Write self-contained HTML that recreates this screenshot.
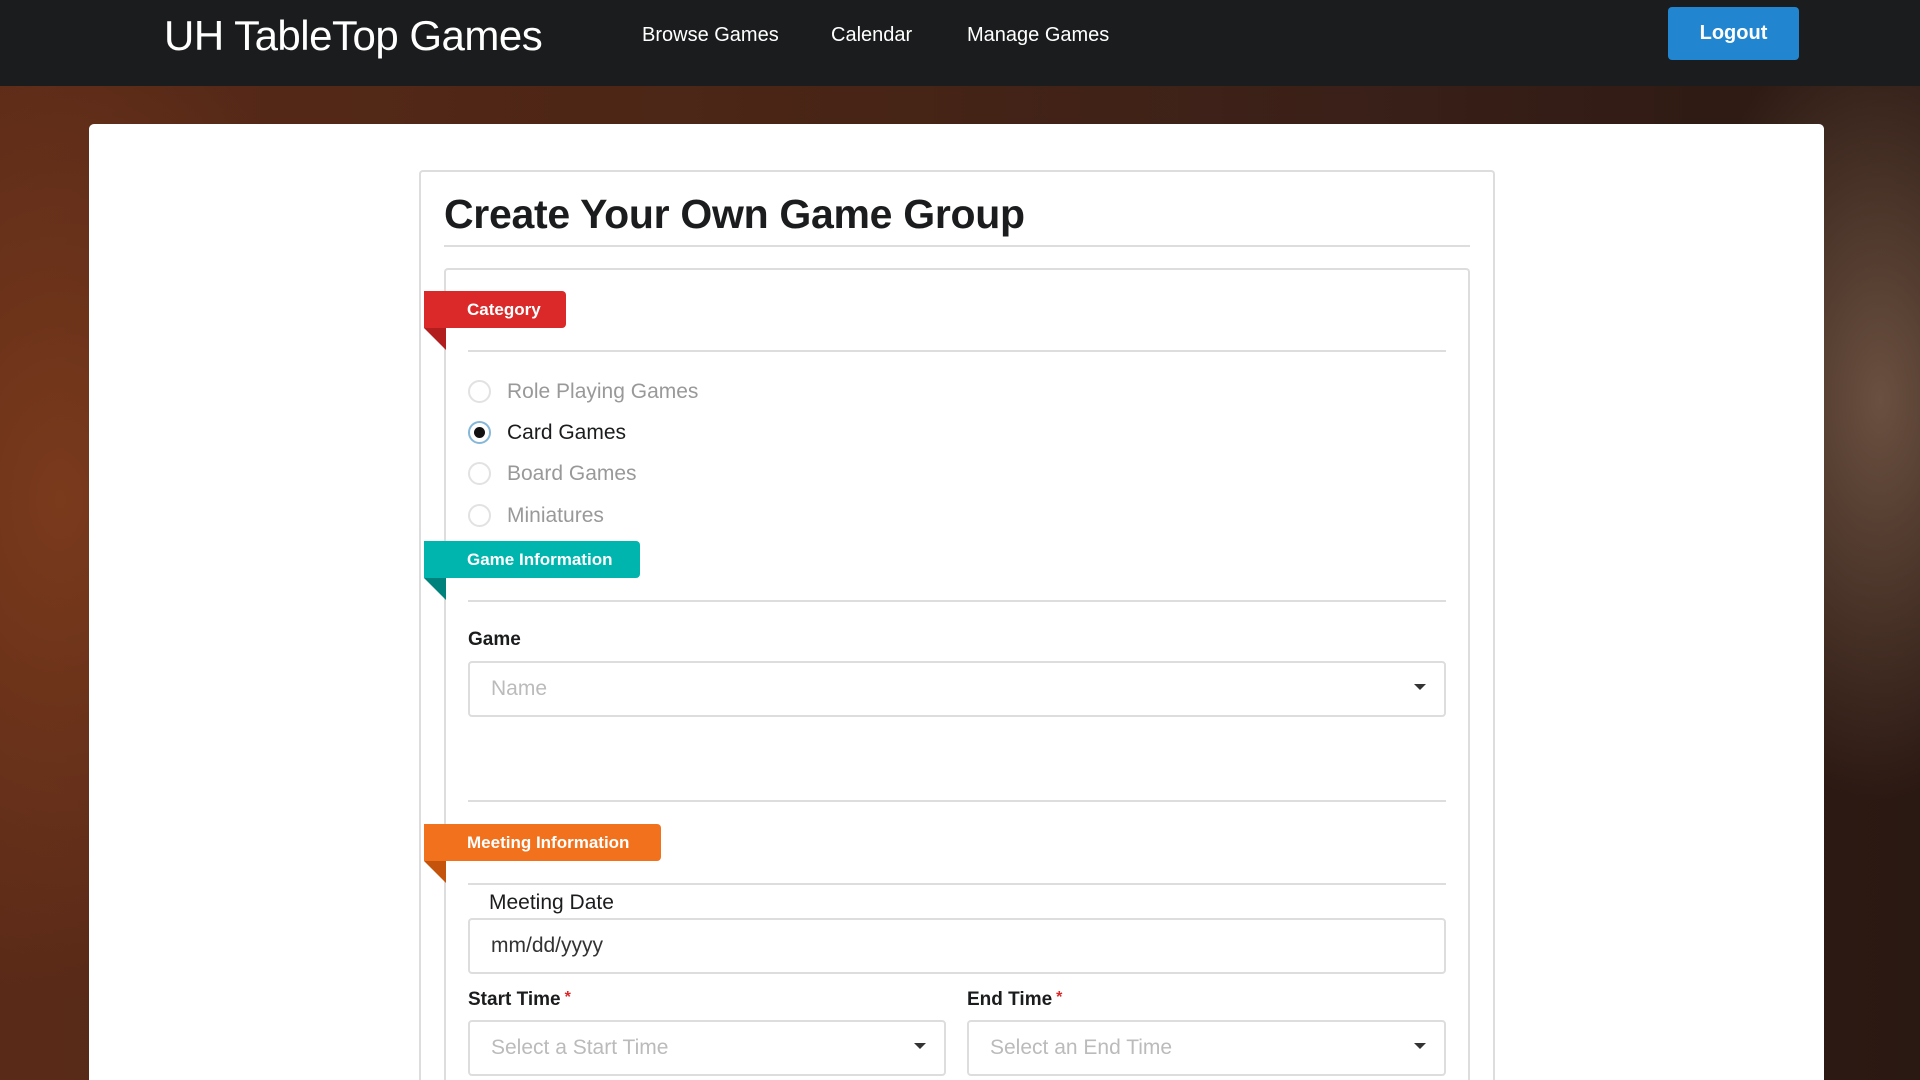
<!DOCTYPE html>
<html style="overflow:hidden;height:1080px"><head><meta charset="utf-8">
<style>
*{box-sizing:border-box;margin:0;padding:0}
body{width:1920px;height:1080px;overflow:hidden;font-family:"Liberation Sans",sans-serif;position:relative;
background:
radial-gradient(ellipse 300px 500px at 60px 500px,#7a3a1c 0%,rgba(0,0,0,0) 100%),
radial-gradient(ellipse 200px 400px at 1880px 400px,#6a5040 0%,rgba(0,0,0,0) 100%),
linear-gradient(90deg,#5a2a18 0%,#4a2516 40%,#3a2018 70%,#2a1812 100%);}
.a{position:absolute}
nav{position:absolute;left:0;top:0;width:1920px;height:86px;background:#1b1c1d}
.brand{left:164px;top:12px;font-size:42px;color:#fff;letter-spacing:-0.5px}
.nl{top:24px;font-size:20px;color:#fff}
.logout{left:1668px;top:7px;width:131px;height:53px;background:#2185d0;border-radius:4px;color:#fff;font-weight:bold;font-size:20px;text-align:center;line-height:53px}
.panel{left:89px;top:124px;width:1735px;height:956px;background:#fff;border-radius:5px 5px 0 0}
.card{left:419px;top:170px;width:1076px;height:910px;border:2px solid #ddd;border-bottom:none;border-radius:4px 4px 0 0;background:#fff}
h1{position:absolute;left:444px;top:191px;font-size:41px;color:#1b1c1d;font-weight:bold;letter-spacing:-0.3px}
.hr{position:absolute;height:2px;background:#ddd}
.seg{left:444px;top:268px;width:1026px;height:812px;border:2px solid #ddd;border-bottom:none;border-radius:4px 4px 0 0}
.rib{position:absolute;left:424px;height:37px;color:#fff;font-weight:bold;font-size:17px;line-height:37px;padding-left:43px;border-radius:0 4px 4px 0}
.fold{position:absolute;left:424px;width:0;height:0;border-left:22px solid transparent;border-top:22px solid}
.rd{position:absolute;left:468px;width:23px;height:23px;border:2px solid #e2e2e2;border-radius:50%}
.rl{position:absolute;left:507px;font-size:21px;color:#999}
.lbl{position:absolute;font-size:19px;font-weight:bold;color:#1b1c1d}
.inp{position:absolute;height:56px;border:2px solid #ddd;border-radius:4px;font-size:21px;color:#bbb;line-height:52px;padding-left:21px}
.car{position:absolute;width:0;height:0;border-left:6px solid transparent;border-right:6px solid transparent;border-top:6px solid #333}
.req{color:#db2828;font-size:16px;vertical-align:top;margin-left:4px}
</style></head><body>
<nav>
<div class="a brand">UH TableTop Games</div>
<div class="a nl" style="left:642px">Browse Games</div>
<div class="a nl" style="left:831px">Calendar</div>
<div class="a nl" style="left:967px">Manage Games</div>
<div class="a logout">Logout</div>
</nav>
<div class="a panel"></div>
<div class="a card"></div>
<h1>Create Your Own Game Group</h1>
<div class="hr" style="left:444px;top:245px;width:1026px"></div>
<div class="a seg"></div>

<div class="rib" style="top:291px;width:142px;background:#db2828">Category</div>
<div class="fold" style="top:328px;border-top-color:#b21e1e"></div>
<div class="hr" style="left:468px;top:350px;width:978px"></div>
<div class="rd" style="top:380px"></div><div class="rl" style="top:380px">Role Playing Games</div>
<div class="rd" style="top:421px;border-color:#85b7d9"><div style="position:absolute;left:4px;top:4px;width:11px;height:11px;border-radius:50%;background:#111"></div></div><div class="rl" style="top:421px;color:#1b1c1d">Card Games</div>
<div class="rd" style="top:462px"></div><div class="rl" style="top:462px">Board Games</div>
<div class="rd" style="top:504px"></div><div class="rl" style="top:504px">Miniatures</div>

<div class="rib" style="top:541px;width:216px;background:#00b5ad">Game Information</div>
<div class="fold" style="top:578px;border-top-color:#00827c"></div>
<div class="hr" style="left:468px;top:600px;width:978px"></div>
<div class="lbl" style="left:468px;top:629px">Game</div>
<div class="inp" style="left:468px;top:661px;width:978px">Name</div>
<div class="car" style="left:1414px;top:684px"></div>
<div class="hr" style="left:468px;top:800px;width:978px"></div>

<div class="rib" style="top:824px;width:237px;background:#f2711c">Meeting Information</div>
<div class="fold" style="top:861px;border-top-color:#c4540c"></div>
<div class="hr" style="left:468px;top:883px;width:978px"></div>
<div class="a" style="left:489px;top:891px;font-size:21px;color:#1b1c1d">Meeting Date</div>
<div class="inp" style="left:468px;top:918px;width:978px;color:#333">mm/dd/yyyy</div>
<div class="lbl" style="left:468px;top:989px">Start Time<span class="req">*</span></div>
<div class="lbl" style="left:967px;top:989px">End Time<span class="req">*</span></div>
<div class="inp" style="left:468px;top:1020px;width:478px">Select a Start Time</div>
<div class="car" style="left:914px;top:1043px"></div>
<div class="inp" style="left:967px;top:1020px;width:479px">Select an End Time</div>
<div class="car" style="left:1414px;top:1043px"></div>
</body></html>
